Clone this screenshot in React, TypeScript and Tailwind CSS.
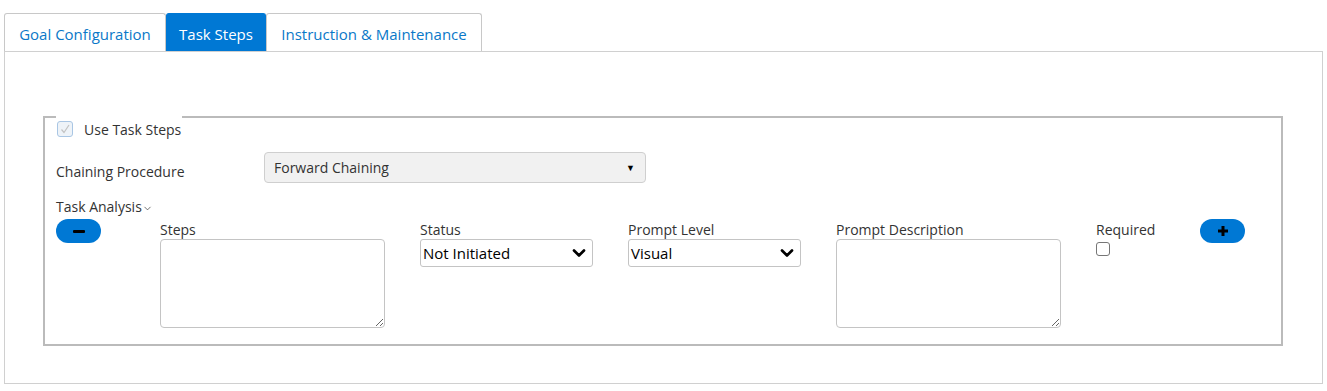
import React from 'react';
import { ChevronDown } from 'lucide-react';

const font = "font-['Segoe_UI','Open_Sans',sans-serif]";

const Tab = ({ label, active, width }: any) => (
    <div
        className={`${width} h-[38px] pt-[3px] flex items-center justify-center border border-b-0 rounded-t-[3px] text-[15px] ${
            active ? 'bg-[#0078d4] border-[#0078d4] text-white' : 'bg-white border-[#c8c8c8] text-[#0a78c8]'
        }`}
    >
        {label}
    </div>
);

const FakeSelect = ({ value }: any) => (
    <div className="w-[173px] h-[28px] border border-[#c4c4c4] rounded-[3px] flex items-center justify-between pl-[2px] pr-[3px] text-[15px] text-black bg-white">
        <span>{value}</span>
        <ChevronDown size={20} strokeWidth={3.2} className="text-black" />
    </div>
);

const PillButton = ({ children }: any) => (
    <button className="w-[45px] h-[24px] rounded-full bg-[#0078d4] flex items-center justify-center">
        {children}
    </button>
);

export default function App() {
    return (
        <div className={`${font} bg-white w-[1327px] h-[391px] pt-[13px] pl-[4px] text-[14px] text-[#333]`}>
            {/* Tabs */}
            <div className="flex">
                <Tab label="Goal Configuration" width="w-[162px]" />
                <Tab label="Task Steps" active width="w-[100px]" />
                <Tab label="Instruction & Maintenance" width="w-[216px]" />
            </div>

            {/* Panel */}
            <div className="w-[1319px] h-[333px] border border-[#d0d0d0] pt-[64px] pl-[38px]">
                <fieldset className="w-[1240px] h-[230px] border-2 border-[#bbbbbb] pl-[11px] pr-[11px] pt-[34px]">
                    <legend className="h-0 ml-0 px-[1px]">
                        <div className="flex items-center gap-[11px] h-[24px]">
                            <span className="w-[16px] h-[16px] rounded-[3px] border border-[#a9c6e4] bg-[#eef3f8] flex items-center justify-center">
                                <svg width="12" height="12" viewBox="0 0 12 12" fill="none">
                                    <path d="M2.5 6.5 L5 9.5 L10 2" stroke="#c2c2c2" strokeWidth="1.2" />
                                </svg>
                            </span>
                            <span>Use Task Steps</span>
                        </div>
                    </legend>

                    {/* Chaining procedure */}
                    <div className="flex items-start">
                        <span className="w-[208px] mt-[9px]">Chaining Procedure</span>
                        <div className="w-[382px] h-[31px] bg-[#f1f1f1] border border-[#cfcfcf] rounded-[4px] flex items-center justify-between pl-[9px] pr-[10px]">
                            <span>Forward Chaining</span>
                            <span className="text-[9px] text-black">▼</span>
                        </div>
                    </div>

                    {/* Task analysis */}
                    <div className="mt-[14px] flex items-center leading-[20px]">
                        Task Analysis
                        <ChevronDown size={11} strokeWidth={1.5} className="mt-[3px]" />
                    </div>

                    {/* Step row */}
                    <div className="flex gap-[35px]">
                        <div className="w-[69px] pt-[2px]">
                            <PillButton>
                                <span className="w-[12px] h-[3px] bg-black rounded-[1px]" />
                            </PillButton>
                        </div>
                        <div className="flex flex-col">
                            <span className="leading-[19px] pt-[3px]">Steps</span>
                            <textarea className="w-[225px] h-[89px] border border-[#c4c4c4] rounded-[4px]" />
                        </div>
                        <div className="flex flex-col">
                            <span className="leading-[19px] pt-[3px]">Status</span>
                            <FakeSelect value="Not Initiated" />
                        </div>
                        <div className="flex flex-col">
                            <span className="leading-[19px] pt-[3px]">Prompt Level</span>
                            <FakeSelect value="Visual" />
                        </div>
                        <div className="flex flex-col">
                            <span className="leading-[19px] pt-[3px]">Prompt Description</span>
                            <textarea className="w-[225px] h-[89px] border border-[#c4c4c4] rounded-[4px]" />
                        </div>
                        <div className="w-[69px] flex flex-col">
                            <span className="leading-[19px] pt-[3px]">Required</span>
                            <span className="mt-[3px] w-[14px] h-[14px] border border-[#767676] rounded-[3px]" />
                        </div>
                        <div className="pt-[2px]">
                            <PillButton>
                                <svg width="12" height="12" viewBox="0 0 12 12">
                                    <path d="M6 1 V11 M1 6 H11" stroke="black" strokeWidth="3" />
                                </svg>
                            </PillButton>
                        </div>
                    </div>
                </fieldset>
            </div>
        </div>
    );
}
